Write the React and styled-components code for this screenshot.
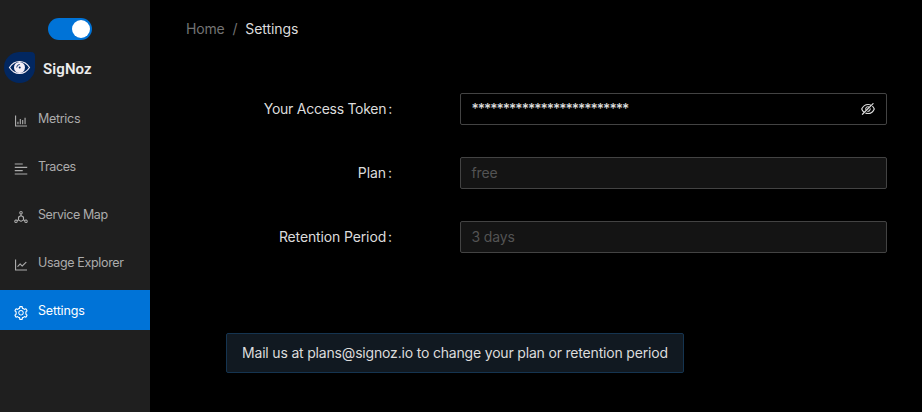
import React from "react";
import styled, { createGlobalStyle } from "styled-components";
import {
  AiOutlineBarChart,
  AiOutlineAlignLeft,
  AiOutlineDeploymentUnit,
  AiOutlineLineChart,
  AiOutlineSetting,
  AiOutlineEyeInvisible,
} from "react-icons/ai";

const GlobalStyle = createGlobalStyle`
  *, *::before, *::after { box-sizing: border-box; }
  body {
    margin: 0;
    background: #000;
    color: #dcdcdc;
    font: 14px/22px Inter, "Liberation Sans", sans-serif;
  }
`;

const Layout = styled.div`
  display: flex;
  width: 100%;
  height: 100vh;
  overflow: hidden;
`;

const Sidebar = styled.aside`
  flex: 0 0 150px;
  background: #1f1f1f;
`;

const SwitchRow = styled.div`
  display: flex;
  justify-content: center;
  padding: 18px 10px 0 0;
`;

const Switch = styled.button`
  display: flex;
  justify-content: flex-end;
  align-items: center;
  width: 44px;
  height: 22px;
  padding: 2px;
  border: 0;
  border-radius: 11px;
  background: #0073d7;
`;

const Knob = styled.span`
  width: 18px;
  height: 18px;
  border-radius: 50%;
  background: #fff;
`;

const Brand = styled.div`
  display: flex;
  align-items: center;
  height: 36px;
  margin-top: 10px;
  padding-left: 4px;
`;

const BrandName = styled.span`
  margin: 1px 0 0 7px;
  color: #ececec;
  font: 600 15px/20px Roboto, sans-serif;
  letter-spacing: 0.1px;
`;

const Menu = styled.nav`
  display: grid;
  gap: 8px;
  margin-top: 12px;
`;

const MenuItem = styled.a`
  display: flex;
  align-items: center;
  height: 40px;
  padding-left: 13px;
  color: ${(p) => (p.$active ? "#fff" : "#acacac")};
  background: ${(p) => (p.$active ? "#0073d7" : "transparent")};
  font-size: 12.5px;

  svg {
    flex: none;
    margin: 5px 9px 0 0;
  }
`;

const MenuLabel = styled.span`
  margin-top: 2px;
  letter-spacing: ${(p) => p.$tracking}px;
`;

const Content = styled.main`
  flex: 1;
  padding: 18px 35px 0 36px;
`;

const Breadcrumb = styled.div`
  display: flex;
  gap: 8px;
  color: #737373;
  letter-spacing: -0.2px;
`;

const Current = styled.span`
  color: #dcdcdc;
  letter-spacing: -0.08px;
`;

const Form = styled.form`
  display: grid;
  gap: 32px;
  margin-top: 53px;
`;

const Field = styled.label`
  display: grid;
  grid-template-columns: 206px 427px;
  justify-content: space-between;
  align-items: center;
`;

const FieldLabel = styled.span`
  text-align: right;
  letter-spacing: ${(p) => p.$tracking}px;

  &::after {
    content: ":";
    margin-left: 2px;
  }
`;

const InputBox = styled.span`
  display: flex;
  justify-content: space-between;
  align-items: center;
  height: 32px;
  padding: 0 10px 0 10.5px;
  border: 1px solid #434343;
  border-radius: 2px;
  color: ${(p) => (p.$disabled ? "#535353" : "#dcdcdc")};
  background: ${(p) => (p.$disabled ? "#141414" : "#000")};
  letter-spacing: -0.15px;
`;

const Secret = styled.span`
  font-weight: 500;
  letter-spacing: ${(p) => p.$tracking}px;
`;

const Notice = styled.div`
  width: 458px;
  height: 40px;
  margin: 80px 0 0 40px;
  padding: 8px 15px;
  border: 1px solid #153450;
  border-radius: 2px;
  background: #111921;
  white-space: nowrap;
  letter-spacing: -0.18px;
`;

const Logo = () => (
  <svg width="32" height="32" viewBox="0 0 32 32" fill="none">
    <path d="M15 0H27Q31 0 31 4V16A15.5 15.5 0 1 1 15 0Z" fill="#022760" />
    <path d="M5.500 15.500C10.500 7.500 20.500 7.500 25.500 15.500C20.500 23.500 10.500 23.500 5.500 15.500Z" stroke="#f5eff8" strokeWidth="1.200" />
    <circle cx="15.500" cy="15.500" r="5.500" fill="#f5eff8" />
    <path d="M12.700 15.500A3 3 0 0 1 15.700 12.500" stroke="#022760" strokeWidth="0.900" />
    <circle cx="15.700" cy="15.500" r="1" fill="#022760" />
  </svg>
);

const MENU = [
  { label: "Metrics", icon: AiOutlineBarChart, tracking: -0.3 },
  { label: "Traces", icon: AiOutlineAlignLeft, tracking: -0.4 },
  { label: "Service Map", icon: AiOutlineDeploymentUnit, tracking: -0.41 },
  { label: "Usage Explorer", icon: AiOutlineLineChart, tracking: -0.34 },
  { label: "Settings", icon: AiOutlineSetting, tracking: -0.15, active: true },
];

export default function App() {
  return (
    <Layout>
      <GlobalStyle />
      <Sidebar>
        <SwitchRow>
          <Switch aria-label="Dark mode"><Knob /></Switch>
        </SwitchRow>
        <Brand>
          <Logo />
          <BrandName>SigNoz</BrandName>
        </Brand>
        <Menu>
          {MENU.map(({ label, icon: Icon, tracking, active }) => (
            <MenuItem key={label} $active={active}>
              <Icon size={16} />
              <MenuLabel $tracking={tracking}>{label}</MenuLabel>
            </MenuItem>
          ))}
        </Menu>
      </Sidebar>
      <Content>
        <Breadcrumb>
          <span>Home</span>
          <span>/</span>
          <Current>Settings</Current>
        </Breadcrumb>
        <Form>
          <Field>
            <FieldLabel $tracking={-0.27}>Your Access Token</FieldLabel>
            <InputBox>
              <Secret $tracking={-1.02}>*************************</Secret>
              <AiOutlineEyeInvisible size={16} />
            </InputBox>
          </Field>
          <Field>
            <FieldLabel $tracking={-0.05}>Plan</FieldLabel>
            <InputBox $disabled>free</InputBox>
          </Field>
          <Field>
            <FieldLabel $tracking={-0.13}>Retention Period</FieldLabel>
            <InputBox $disabled>3 days</InputBox>
          </Field>
        </Form>
        <Notice>Mail us at plans@signoz.io to change your plan or retention period</Notice>
      </Content>
    </Layout>
  );
}
